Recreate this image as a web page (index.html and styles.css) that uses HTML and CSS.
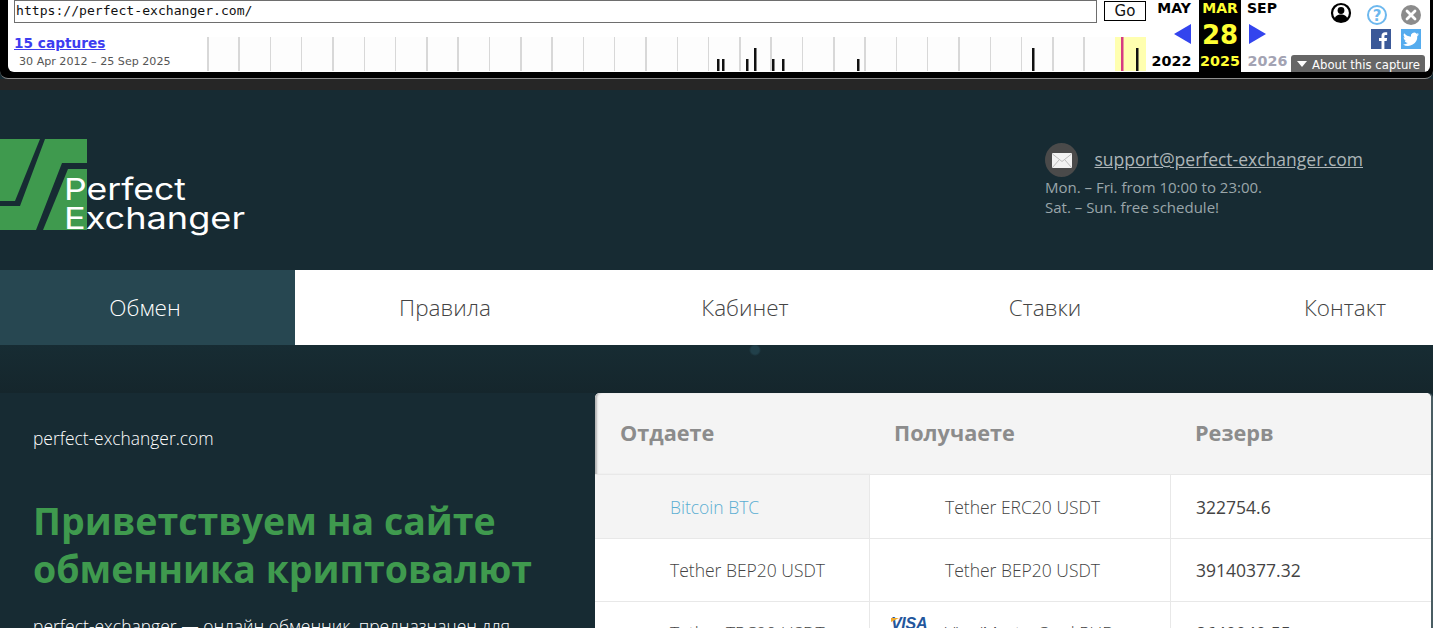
FILE: index.html
```html
<!DOCTYPE html>
<html lang="ru">
<head>
    <meta charset="UTF-8">
    <meta name="viewport" content="width=device-width, initial-scale=1.0">
    <title>Perfect Exchanger</title>
    <link rel="stylesheet" href="styles.css">
</head>
<body>
    <!-- capture toolbar -->
    <div class="toolbar">
        <div class="toolbar-inner">
            <div class="tb-left">
                <div class="url-row">
                    <div class="url-box">https://perfect-exchanger.com/</div>
                    <div class="go-btn">Go</div>
                </div>
                <div class="captures-row">
                    <div class="captures">
                        <a class="captures-link" href="#">15 captures</a>
                        <div class="captures-dates">30 Apr 2012 – 25 Sep 2025</div>
                    </div>
                    <div class="timeline">
                        <svg class="timeline-bars" width="939" height="34" viewBox="0 0 939 34">
                            <rect x="510" y="22" width="2.500" height="12" />
                            <rect x="515" y="22" width="2.500" height="12" />
                            <rect x="539" y="22" width="2.500" height="12" />
                            <rect x="547" y="11" width="2.500" height="23" />
                            <rect x="565" y="22" width="2.500" height="12" />
                            <rect x="575" y="22" width="2.500" height="12" />
                            <rect x="650" y="22" width="2.500" height="12" />
                            <rect x="825" y="11" width="2.500" height="23" />
                            <rect x="914" y="0" width="2.500" height="34" fill="#d63b82" />
                            <rect x="929" y="11" width="2.500" height="23" />
                        </svg>
                    </div>
                </div>
            </div>
            <div class="calendar">
                <div class="cal-col cal-prev">
                    <div class="cal-month">MAY</div>
                    <div class="cal-mid cal-mid-prev"><span class="arrow-left"></span></div>
                    <div class="cal-year">2022</div>
                </div>
                <div class="cal-col cal-current">
                    <div class="cal-month">MAR</div>
                    <div class="cal-mid cal-day">28</div>
                    <div class="cal-year">2025</div>
                </div>
                <div class="cal-col cal-next">
                    <div class="cal-month">SEP</div>
                    <div class="cal-mid cal-mid-next"><span class="arrow-right"></span></div>
                    <div class="cal-year cal-year-off">2026</div>
                </div>
            </div>
            <div class="tb-icons">
                <div class="icon-row">
                    <svg class="icon-user" width="22" height="22" viewBox="0 0 22 22">
                        <circle cx="11" cy="11" r="9" fill="#fff" stroke="#000" stroke-width="2.200" />
                        <circle cx="11" cy="8.500" r="3.400" fill="#000" />
                        <path d="M4.500 17c1-3.600 3.600-4.600 6.500-4.600s5.500 1 6.500 4.600c-1.700 1.800-4 2.800-6.500 2.800s-4.800-1-6.500-2.800z" fill="#000" />
                    </svg>
                    <svg class="icon-help" width="22" height="22" viewBox="0 0 22 22">
                        <circle cx="11" cy="11" r="9" fill="#fff" stroke="#6db8ee" stroke-width="2" />
                        <text x="11" y="16.500" text-anchor="middle" class="icon-help-text">?</text>
                    </svg>
                    <svg class="icon-close" width="22" height="22" viewBox="0 0 22 22">
                        <circle cx="11" cy="11" r="10" fill="#8c8c8c" />
                        <path d="M7 7l8 8M15 7l-8 8" stroke="#fff" stroke-width="2.800" stroke-linecap="round" />
                    </svg>
                </div>
                <div class="icon-row icon-row-social">
                    <svg width="20" height="20" viewBox="0 0 20 20">
                        <rect width="20" height="20" fill="#3b5998" />
                        <path d="M10.500 20v-8H8V9h2.500V7c0-2.600 1.500-3.800 3.700-3.800h2v2.900h-1.400c-1.100 0-1.400.5-1.400 1.300V9h2.700l-.4 3h-2.300v8z" fill="#fff" />
                    </svg>
                    <svg width="20" height="20" viewBox="0 0 20 20">
                        <rect width="20" height="20" fill="#55acee" />
                        <path d="M18 5.200c-.6.300-1.200.4-1.900.5.700-.4 1.200-1 1.400-1.800-.6.400-1.300.6-2 .8a3.300 3.300 0 0 0-5.600 3C7.200 7.600 4.800 6.300 3.100 4.300c-.9 1.500-.4 3.400 1 4.400-.5 0-1-.2-1.500-.4 0 1.600 1.100 3 2.600 3.300-.5.100-1 .2-1.500.1.400 1.300 1.600 2.200 3.100 2.300A6.600 6.600 0 0 1 2 15.400 9.300 9.300 0 0 0 16.300 7.100c.7-.5 1.300-1.100 1.700-1.900z" fill="#fff" />
                    </svg>
                </div>
            </div>
            <div class="about-capture"><span class="about-caret"></span>About this capture</div>
        </div>
    </div>
    <div class="toolbar-shadow"></div>

    <!-- site header -->
    <header class="site-header">
        <svg class="logo" width="250" height="100" viewBox="0 0 250 100">
            <polygon points="0,0 40,0 15,62 0,62" fill="#3f9a4e" />
            <polygon points="45,0 87,0 87,24 62,24 36,91 0,91 0,67 20,67" fill="#3f9a4e" />
            <polygon points="68,30 87,30 87,91 43,91" fill="#3f9a4e" />
            <text x="64" y="61" class="logo-text" textLength="122" lengthAdjust="spacingAndGlyphs">Perfect</text>
            <text x="64" y="89.500" class="logo-text" textLength="181" lengthAdjust="spacingAndGlyphs">Exchanger</text>
        </svg>
        <div class="contact">
            <div class="contact-mail">
                <span class="mail-icon">
                    <svg width="20" height="15" viewBox="0 0 20 15">
                        <rect width="20" height="15" rx="1" fill="#f2f2f2" />
                        <path d="M0.500 1l9.500 7.500L19.500 1M0.500 14.500l6.500-7.500M19.500 14.500l-6.500-7.500" fill="none" stroke="#b5b5b5" stroke-width="0.900" />
                    </svg>
                </span>
                <a class="mail-link" href="#">support@perfect-exchanger.com</a>
            </div>
            <div class="contact-hours">Mon. – Fri. from 10:00 to 23:00.</div>
            <div class="contact-hours">Sat. – Sun. free schedule!</div>
        </div>
    </header>

    <nav class="nav">
        <a class="nav-item active" href="#">Обмен</a>
        <a class="nav-item" href="#">Правила</a>
        <a class="nav-item" href="#">Кабинет</a>
        <a class="nav-item" href="#">Ставки</a>
        <a class="nav-item" href="#">Контакт</a>
    </nav>

    <div class="band"></div>

    <main class="content">
        <section class="intro">
            <div class="intro-site">perfect-exchanger.com</div>
            <h1>Приветствуем на сайте обменника криптовалют</h1>
            <p>perfect-exchanger — онлайн обменник, предназначен для</p>
        </section>
        <section class="rates">
            <table class="rates-table">
                <thead>
                    <tr>
                        <th class="col-give">Отдаете</th>
                        <th class="col-get">Получаете</th>
                        <th class="col-reserve">Резерв</th>
                    </tr>
                </thead>
                <tbody>
                    <tr>
                        <td class="cell-name cell-active">Bitcoin BTC</td>
                        <td class="cell-name">Tether ERC20 USDT</td>
                        <td class="cell-reserve">322754.6</td>
                    </tr>
                    <tr>
                        <td class="cell-name">Tether BEP20 USDT</td>
                        <td class="cell-name">Tether BEP20 USDT</td>
                        <td class="cell-reserve">39140377.32</td>
                    </tr>
                    <tr>
                        <td class="cell-name">Tether TRC20 USDT</td>
                        <td class="cell-name cell-visa"><span class="visa-logo">VISA</span>Visa/MasterCard RUB</td>
                        <td class="cell-reserve">8640040.55</td>
                    </tr>
                </tbody>
            </table>
        </section>
    </main>
</body>
</html>
```

FILE: styles.css
```css
* {
    box-sizing: border-box;
}

html, body {
    height: 628px;
    margin: 0;
    padding: 0;
    overflow: hidden;
    font-family: 'Open Sans', sans-serif;
    background-color: #172b33;
}

a {
    color: inherit;
}

/* toolbar */
.toolbar {
    height: 79px;
    padding: 0 3px 6px 8px;
    background-color: #000;
    border-bottom: 1px solid #8f8f8f;
    border-radius: 0 0 8px 8px;
    font-family: 'DejaVu Sans', sans-serif;
}

.toolbar-inner {
    position: relative;
    display: flex;
    height: 72px;
    background-color: #fff;
    border-radius: 0 0 6px 6px;
}

.toolbar-shadow {
    height: 11px;
    background-color: #262626;
}

.tb-left {
    width: 1138px;
    flex: none;
}

.url-row {
    display: flex;
    padding-left: 6px;
    height: 37px;
}

.url-box {
    width: 1083px;
    height: 23px;
    padding: 1px 0 0 1px;
    border: 1px solid #6e6e6e;
    font-family: 'DejaVu Sans Mono', monospace;
    font-size: 13.100px;
    line-height: 18px;
    color: #111;
}

.go-btn {
    width: 42px;
    height: 20px;
    margin: 1px 0 0 7px;
    border: 1px solid #000;
    font-size: 15px;
    line-height: 18px;
    text-align: center;
    color: #111;
}

.captures-row {
    display: flex;
    height: 34px;
}

.captures {
    width: 199px;
    flex: none;
    padding-left: 6px;
}

.captures-link {
    display: block;
    margin-top: -2px;
    font-size: 13.700px;
    font-weight: bold;
    line-height: 17px;
    color: #3d3df0;
}

.captures-dates {
    margin: 3px 0 0 5px;
    font-size: 11.100px;
    line-height: 14px;
    color: #555;
}

.timeline {
    width: 939px;
    height: 34px;
    background-color: #fdfdfd;
    background-image:
        linear-gradient(#ffffb0, #ffffb0),
        repeating-linear-gradient(90deg, #d8d8d8 0, #d8d8d8 1.500px, transparent 1.500px, transparent 31.300px);
    background-size: 31px 100%, 100% 100%;
    background-position: 908px 0, 0 0;
    background-repeat: no-repeat;
}

.timeline-bars {
    display: block;
    fill: #111;
}

/* calendar */
.calendar {
    display: flex;
    flex: none;
    margin-left: 3px;
}

.cal-col {
    display: flex;
    flex-direction: column;
    width: 50px;
    text-align: center;
    color: #000;
    font-weight: bold;
}

.cal-current {
    width: 42px;
    background-color: #000;
    color: #ff3;
}

.cal-month {
    height: 17px;
    font-size: 14px;
    line-height: 16px;
}

.cal-mid {
    display: flex;
    align-items: center;
    height: 33px;
}

.cal-mid-prev {
    justify-content: flex-end;
    padding-right: 8px;
}

.cal-mid-next {
    padding-left: 8px;
}

.cal-day {
    justify-content: center;
    padding-top: 3px;
    font-size: 26px;
}

.cal-year {
    font-size: 14.300px;
    line-height: 22px;
}

.cal-prev .cal-year {
    padding-right: 5px;
}

.cal-next .cal-month {
    padding-right: 8px;
}

.cal-next .cal-year {
    padding-left: 3px;
}

.cal-year-off {
    color: #a3a3b3;
}

.arrow-left {
    border-top: 10px solid transparent;
    border-bottom: 10px solid transparent;
    border-right: 17px solid #3344ee;
}

.arrow-right {
    border-top: 10px solid transparent;
    border-bottom: 10px solid transparent;
    border-left: 17px solid #3344ee;
}

/* top right icons */
.tb-icons {
    display: flex;
    flex-direction: column;
    align-items: flex-end;
    flex: 1;
    padding: 4px 8px 0 0;
}

.icon-row {
    display: flex;
    gap: 12px;
    height: 25px;
}

.icon-row svg {
    display: block;
}

.icon-user {
    margin: -2px 2px 0 0;
}

.icon-row-social {
    gap: 10px;
    padding-right: 1px;
}

.icon-help-text {
    font-size: 15px;
    font-weight: bold;
    fill: #6db8ee;
}

.about-capture {
    position: absolute;
    right: 5px;
    bottom: 0;
    width: 134px;
    height: 17px;
    padding-left: 21px;
    background-color: #666;
    border-radius: 3px 3px 0 0;
    font-size: 11.700px;
    line-height: 20px;
    white-space: nowrap;
    color: #fff;
}

.about-caret {
    position: absolute;
    left: 6px;
    top: 6px;
    border-left: 5px solid transparent;
    border-right: 5px solid transparent;
    border-top: 6px solid #fff;
}

/* site header */
.site-header {
    display: flex;
    justify-content: space-between;
    height: 180px;
    padding: 49px 70px 0 0;
    background-color: #172b33;
}

.logo {
    display: block;
}

.logo-text {
    font-family: 'Inter', sans-serif;
    font-size: 30px;
    font-weight: 400;
    fill: #fff;
}

.contact {
    width: 318px;
    padding-top: 4px;
    font-size: 15px;
    line-height: 20px;
    color: #9aa6aa;
}

.contact-mail {
    display: flex;
    align-items: center;
    gap: 16.500px;
    height: 34px;
}

.mail-icon {
    display: flex;
    align-items: center;
    justify-content: center;
    width: 34px;
    height: 34px;
    border-radius: 50%;
    background-color: #4a4a4a;
}

.mail-link {
    margin-top: -2px;
    font-size: 17.500px;
    white-space: nowrap;
    color: #adb5b8;
}

/* navigation */
.nav {
    display: flex;
    height: 75px;
    margin-left: -5px;
    width: 1500px;
    background-color: #fff;
}

.nav-item {
    display: flex;
    align-items: center;
    justify-content: center;
    width: 300px;
    flex: none;
    font-size: 22.500px;
    font-weight: 300;
    text-decoration: none;
    color: #444;
}

.nav-item.active {
    background-color: #274751;
    color: #fff;
}

.band {
    height: 48px;
    background-color: #162a31;
    background-image:
        radial-gradient(circle at 755px 5px, #21404a 0, #21404a 4px, transparent 6px),
        linear-gradient(#172c33, #15262c);
}

/* main */
.content {
    display: flex;
    height: 235px;
    overflow: hidden;
}

.intro {
    width: 595px;
    flex: none;
    padding: 33px 0 0 33px;
    background-color: #172b33;
    color: #fff;
}

.intro-site {
    font-size: 17.400px;
    font-weight: 300;
    line-height: 24px;
}

.intro h1 {
    width: 510px;
    margin: 47px 0 0;
    font-size: 37.500px;
    font-weight: 700;
    line-height: 48px;
    color: #3f9a4e;
}

.intro p {
    margin: 21px 0 0;
    font-size: 17.500px;
    font-weight: 300;
    line-height: 24px;
    white-space: nowrap;
}

.rates {
    flex: 1;
    min-width: 0;
}

.rates-table {
    width: 836px;
    border-collapse: separate;
    border-spacing: 0;
    table-layout: fixed;
    background-color: #fff;
    border-radius: 5px 5px 0 0;
    box-shadow: 2px 0 0 #4a5d63;
}

.rates-table th {
    height: 82px;
    padding: 0 0 2px 25px;
    background-color: #f4f4f4;
    border-bottom: 1px solid #e8e8e8;
    font-size: 21.700px;
    font-weight: 700;
    text-align: left;
    color: #8c8c8c;
}

.col-give {
    width: 275px;
    box-shadow: inset 3px 0 2px -1px #b5b5b5;
}

.rates-table th.col-give {
    border-radius: 5px 0 0 0;
}

.col-get {
    width: 301px;
}

.rates-table th.col-get {
    padding-left: 24px;
}

.rates-table th.col-reserve {
    padding-left: 24px;
    border-radius: 0 5px 0 0;
}

.rates-table td {
    height: 63px;
    border-bottom: 1px solid #e8e8e8;
    border-right: 1px solid #e8e8e8;
    font-size: 17.500px;
    color: #444;
}

.rates-table tbody tr:first-child td {
    height: 64px;
}

.rates-table .cell-name {
    padding-left: 75px;
    font-weight: 300;
}

.rates-table .cell-reserve {
    padding-left: 25px;
    border-right: none;
}

.rates-table .cell-active {
    background-color: #f4f4f4;
    color: #5aaed2;
}

.cell-visa {
    position: relative;
}

.visa-logo {
    position: absolute;
    left: 21px;
    top: 14px;
    font-family: 'Liberation Sans', sans-serif;
    font-size: 16px;
    font-weight: bold;
    font-style: italic;
    line-height: 16px;
    letter-spacing: -0.300px;
    color: #23569c;
}

.visa-logo::before {
    content: "";
    position: absolute;
    left: 0;
    top: 2px;
    border-top: 4px solid #efa82c;
    border-right: 8px solid transparent;
}
```
